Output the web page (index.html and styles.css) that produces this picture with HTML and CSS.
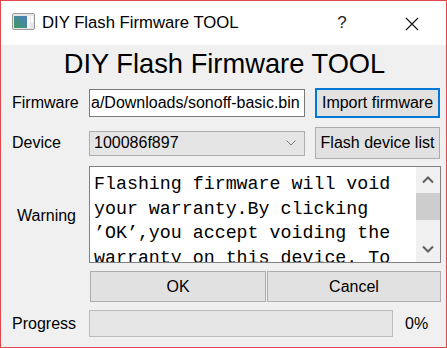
FILE: index.html
```html
<!DOCTYPE html>
<html lang="en">
<head>
    <meta charset="UTF-8">
    <meta name="viewport" content="width=device-width, initial-scale=1.0">
    <title>DIY Flash Firmware TOOL</title>
    <link rel="stylesheet" href="styles.css">
</head>
<body>
    <div class="window">
        <div class="titlebar">
            <svg class="app-icon" width="23" height="17" viewBox="0 0 23 17">
                <defs>
                    <linearGradient id="g" x1="0" y1="1" x2="1" y2="0">
                        <stop offset="0" stop-color="#3f9a5c"/>
                        <stop offset="1" stop-color="#4a7fc4"/>
                    </linearGradient>
                </defs>
                <rect x="0.5" y="0.5" width="22" height="16" rx="1.5" fill="#e6e6e6" stroke="#9a9a9a"/>
                <rect x="2" y="3" width="13" height="12" fill="url(#g)"/>
                <rect x="15" y="3" width="3" height="12" fill="#f8f8f8"/>
                <rect x="19" y="3" width="2" height="7" fill="#ffffff"/>
            </svg>
            <span class="title">DIY Flash Firmware TOOL</span>
            <span class="caption-btn help">?</span>
            <span class="caption-btn close">
                <svg width="14" height="14" viewBox="0 0 14 14">
                    <path d="M1 1 L13 13 M13 1 L1 13" stroke="#111" stroke-width="1.1" fill="none"/>
                </svg>
            </span>
        </div>

        <div class="content">
            <h1 class="heading">DIY Flash Firmware TOOL</h1>

            <div class="row row-firmware">
                <span class="label">Firmware</span>
                <div class="field text-input">a/Downloads/sonoff-basic.bin</div>
                <button class="btn btn-side btn-focus">Import firmware</button>
            </div>

            <div class="row row-device">
                <span class="label">Device</span>
                <div class="field combo">
                    <span>100086f897</span>
                    <svg class="combo-arrow" width="10" height="6" viewBox="0 0 10 6">
                        <path d="M0.5 0.5 L5 5 L9.5 0.5" stroke="#777" stroke-width="1" fill="none"/>
                    </svg>
                </div>
                <button class="btn btn-side">Flash device list</button>
            </div>

            <div class="row row-warning">
                <span class="label label-warning">Warning</span>
                <div class="textbox">
                    <div class="textbox-text">Flashing firmware will void your warranty.By clicking ’OK’,you accept voiding the warranty on this device. To</div>
                    <div class="scrollbar">
                        <div class="scroll-arrow">
                            <svg width="12" height="8" viewBox="0 0 12 8">
                                <path d="M1 6.5 L6 1.5 L11 6.5" stroke="#606060" stroke-width="2" fill="none"/>
                            </svg>
                        </div>
                        <div class="scroll-thumb"></div>
                        <div class="scroll-space"></div>
                        <div class="scroll-arrow">
                            <svg width="12" height="8" viewBox="0 0 12 8">
                                <path d="M1 1.5 L6 6.5 L11 1.5" stroke="#606060" stroke-width="2" fill="none"/>
                            </svg>
                        </div>
                    </div>
                </div>
            </div>

            <div class="row row-actions">
                <button class="btn btn-ok">OK</button>
                <button class="btn btn-cancel">Cancel</button>
            </div>

            <div class="row row-progress">
                <span class="label">Progress</span>
                <div class="progress"></div>
                <span class="percent">0%</span>
            </div>
        </div>
    </div>
</body>
</html>
```

FILE: styles.css
```css
body {
    margin: 0;
    font-family: "Liberation Sans", Arial, sans-serif;
    background-color: #f0f0f0;
}

.window {
    width: 447px;
    height: 348px;
    box-sizing: border-box;
    border: 1px solid #e2474b;
    background-color: #f0f0f0;
}

/* Title bar */
.titlebar {
    height: 44px;
    background-color: #fff;
    display: flex;
    align-items: center;
    padding-left: 11px;
}

.app-icon {
    margin-bottom: 3px;
    flex-shrink: 0;
}

.title {
    margin-left: 7px;
    font-size: 16.7px;
    color: #000;
}

.caption-btn {
    width: 46px;
    text-align: center;
    font-size: 17px;
    color: #222;
}

.help {
    margin-left: auto;
    margin-right: 24px;
}

.close {
    margin-right: 11px;
    display: flex;
    justify-content: center;
    padding-top: 2px;
}

/* Main content */
.content {
    padding: 0 5px 0 11px;
}

.heading {
    margin: 0 0 6px;
    font-size: 27.3px;
    font-weight: normal;
    line-height: 37px;
    text-align: center;
    color: #000;
    padding-right: 4px;
}

.row {
    display: flex;
    align-items: center;
    font-size: 16px;
    color: #000;
}

.label {
    width: 77px;
    flex-shrink: 0;
}

.label-warning {
    padding-left: 5px;
    box-sizing: border-box;
    padding-top: 3px;
}

.field {
    width: 216px;
    box-sizing: border-box;
    white-space: nowrap;
    overflow: hidden;
}

.text-input {
    height: 28px;
    line-height: 26px;
    border: 1px solid #7a7a7a;
    background-color: #fff;
    padding-left: 1px;
}

.combo {
    height: 25px;
    border: 1px solid #adadad;
    background-color: #e5e5e5;
    display: flex;
    align-items: center;
    padding-left: 4px;
}

.combo-arrow {
    margin-left: auto;
    margin-right: 8px;
}

.btn {
    font-family: inherit;
    font-size: 16px;
    color: #000;
    background-color: #e1e1e1;
    border: 1px solid #adadad;
    padding: 0;
    box-sizing: border-box;
}

.btn-side {
    margin-left: 10px;
    width: 125px;
}

.btn-focus {
    border: 2px solid #0078d7;
}

.row-firmware {
    height: 30px;
}

.row-firmware .btn {
    height: 30px;
}

.row-device {
    height: 32px;
    margin-top: 9px;
}

.row-device .btn {
    height: 32px;
}

/* Warning text area */
.row-warning {
    margin-top: 7px;
}

.textbox {
    width: 353px;
    height: 97px;
    box-sizing: border-box;
    border: 1px solid #828282;
    background-color: #fff;
    display: flex;
    overflow: hidden;
}

.textbox-text {
    flex: 1;
    padding: 5px 4px 0 4px;
    font-family: "Liberation Mono", "Courier New", monospace;
    font-size: 18.3px;
    line-height: 24.5px;
    color: #000;
    overflow: hidden;
}

.scrollbar {
    width: 24px;
    flex-shrink: 0;
    background-color: #f0f0f0;
    display: flex;
    flex-direction: column;
}

.scroll-arrow {
    height: 26px;
    display: flex;
    align-items: center;
    justify-content: center;
}

.scroll-thumb {
    height: 27px;
    background-color: #cdcdcd;
}

.scroll-space {
    flex: 1;
}

/* Buttons */
.row-actions {
    margin-top: 8px;
    padding-left: 78px;
    gap: 1px;
}

.btn-ok {
    width: 176px;
    height: 31px;
}

.btn-cancel {
    width: 174px;
    height: 31px;
}

/* Progress */
.row-progress {
    margin-top: 8px;
    height: 27px;
}

.progress {
    width: 304px;
    height: 27px;
    box-sizing: border-box;
    border: 1px solid #bcbcbc;
    background-color: #e6e6e6;
}

.percent {
    margin-left: 12px;
}
```
